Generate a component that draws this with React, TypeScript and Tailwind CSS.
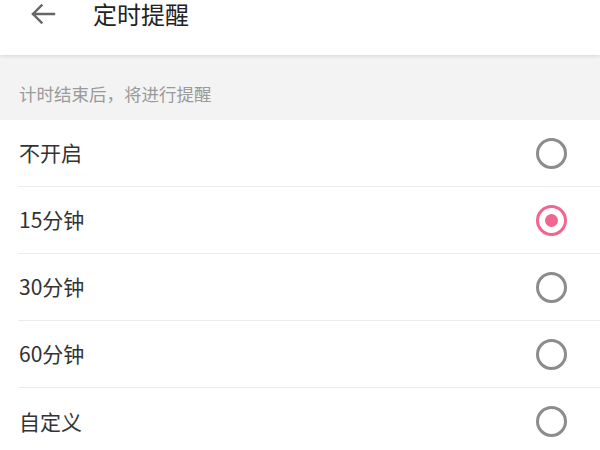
import React from "react";

const options = ["不开启", "15分钟", "30分钟", "60分钟", "自定义"];

export default function App() {
  const selected = 1;
  return (
    <div
      className="w-[600px] h-[450px] overflow-hidden bg-white"
      style={{ fontFamily: '"Noto Sans CJK SC", "Noto Sans", sans-serif' }}
    >
      <div className="relative z-10 h-[55px] bg-white shadow-[0_1px_4px_rgba(0,0,0,0.12)] flex items-start">
        <div className="w-[86px] h-[28px] flex items-center pl-[30px]">
          <svg width="26" height="22" viewBox="0 0 26 22" fill="none">
            <path d="M24 11H3M11.5 2.5L3 11l8.5 8.5" stroke="#666" strokeWidth="2.4" strokeLinecap="square" />
          </svg>
        </div>
        <div className="h-[28px] flex items-center pl-[7px] text-[24px] text-[#222] leading-none">定时提醒</div>
      </div>
      <div className="h-[65px] bg-[#f3f3f3] flex items-center pl-[19px] pt-[14px] text-[17.5px] text-[#9a9a9a]">
        计时结束后，将进行提醒
      </div>
      <div className="flex flex-col">
        {options.map((o, i) => (
          <div key={o} className="pl-[18px]">
            <div
              className={`h-[67px] flex items-center justify-between pr-[33px] ${i < options.length - 1 ? "border-b border-[#ececec]" : ""}`}
            >
              <span className="pl-[1px] text-[21px] text-[#333]">{o}</span>
              {i === selected ? (
                <div className="w-[31px] h-[31px] rounded-full border-[3px] border-[#f06690] flex items-center justify-center">
                  <div className="w-[13px] h-[13px] rounded-full bg-[#f06690]" />
                </div>
              ) : (
                <div className="w-[31px] h-[31px] rounded-full border-[3px] border-[#8c8c8c]" />
              )}
            </div>
          </div>
        ))}
      </div>
    </div>
  );
}
